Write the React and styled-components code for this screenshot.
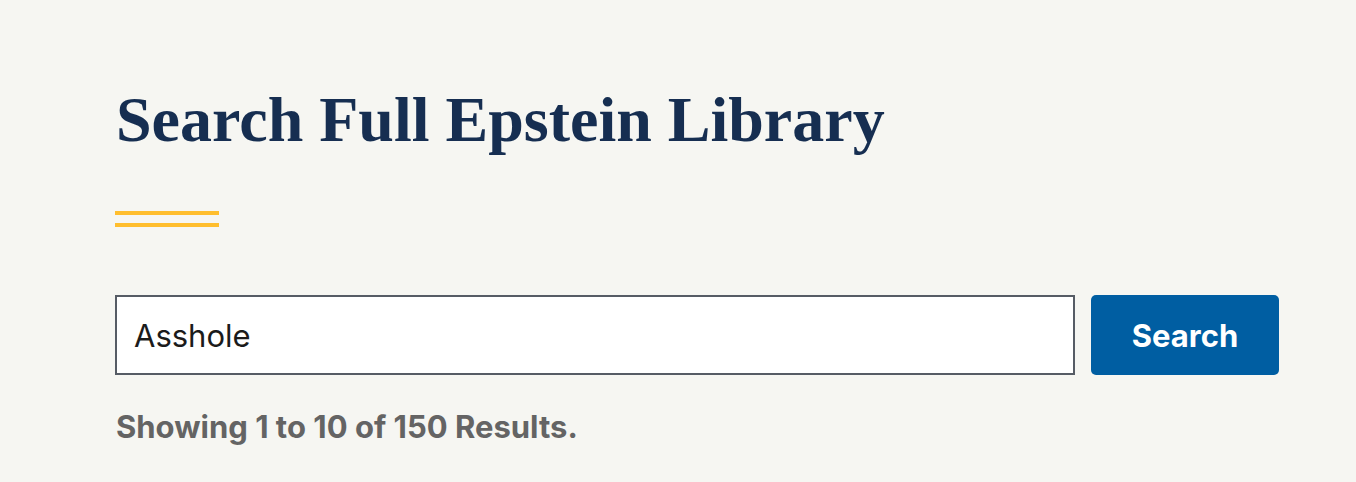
import styled, { createGlobalStyle } from 'styled-components'

const GlobalStyle = createGlobalStyle`
  html, body {
    margin: 0;
    padding: 0;
    background: #f6f6f2;
  }
`

const Page = styled.div`
  width: 1356px;
  height: 482px;
  box-sizing: border-box;
  padding: 78px 77px 0 116px;
  background: #f6f6f2;
`

const Title = styled.h1`
  margin: 0;
  font-family: "Liberation Serif", serif;
  font-weight: 700;
  font-size: 64px;
  line-height: 84px;
  color: #162e51;
`

const Rule = styled.div`
  width: 104px;
  height: 8px;
  margin: 49px 0 0 -1px;
  border-top: 4px solid #ffbe2e;
  border-bottom: 4px solid #ffbe2e;
`

const SearchForm = styled.form`
  display: flex;
  gap: 16px;
  margin-top: 68px;
  margin-left: -1px;
`

const Input = styled.input`
  flex: 1;
  height: 80px;
  box-sizing: border-box;
  border: 2px solid #565c65;
  border-radius: 0;
  background: #fff;
  padding: 0 17px;
  font-family: Inter, "Liberation Sans", sans-serif;
  font-size: 31px;
  color: #1b1b1b;
  outline: none;
`

const Button = styled.button`
  width: 188px;
  height: 80px;
  border: 0;
  border-radius: 5px;
  background: #005ea2;
  color: #fff;
  font-family: Inter, "Liberation Sans", sans-serif;
  font-weight: 700;
  font-size: 31px;
  cursor: pointer;
`

const Summary = styled.p`
  margin: 34px 0 0;
  font-family: Inter, "Liberation Sans", sans-serif;
  font-weight: 700;
  font-size: 31px;
  line-height: 36px;
  color: #646464;
`

const App = () => {
  return (
    <>
      <GlobalStyle />
      <Page>
        <Title>Search Full Epstein Library</Title>
        <Rule />
        <SearchForm onSubmit={(e) => e.preventDefault()}>
          <Input defaultValue="Asshole" />
          <Button type="submit">Search</Button>
        </SearchForm>
        <Summary>Showing 1 to 10 of 150 Results.</Summary>
      </Page>
    </>
  )
}

export default App
